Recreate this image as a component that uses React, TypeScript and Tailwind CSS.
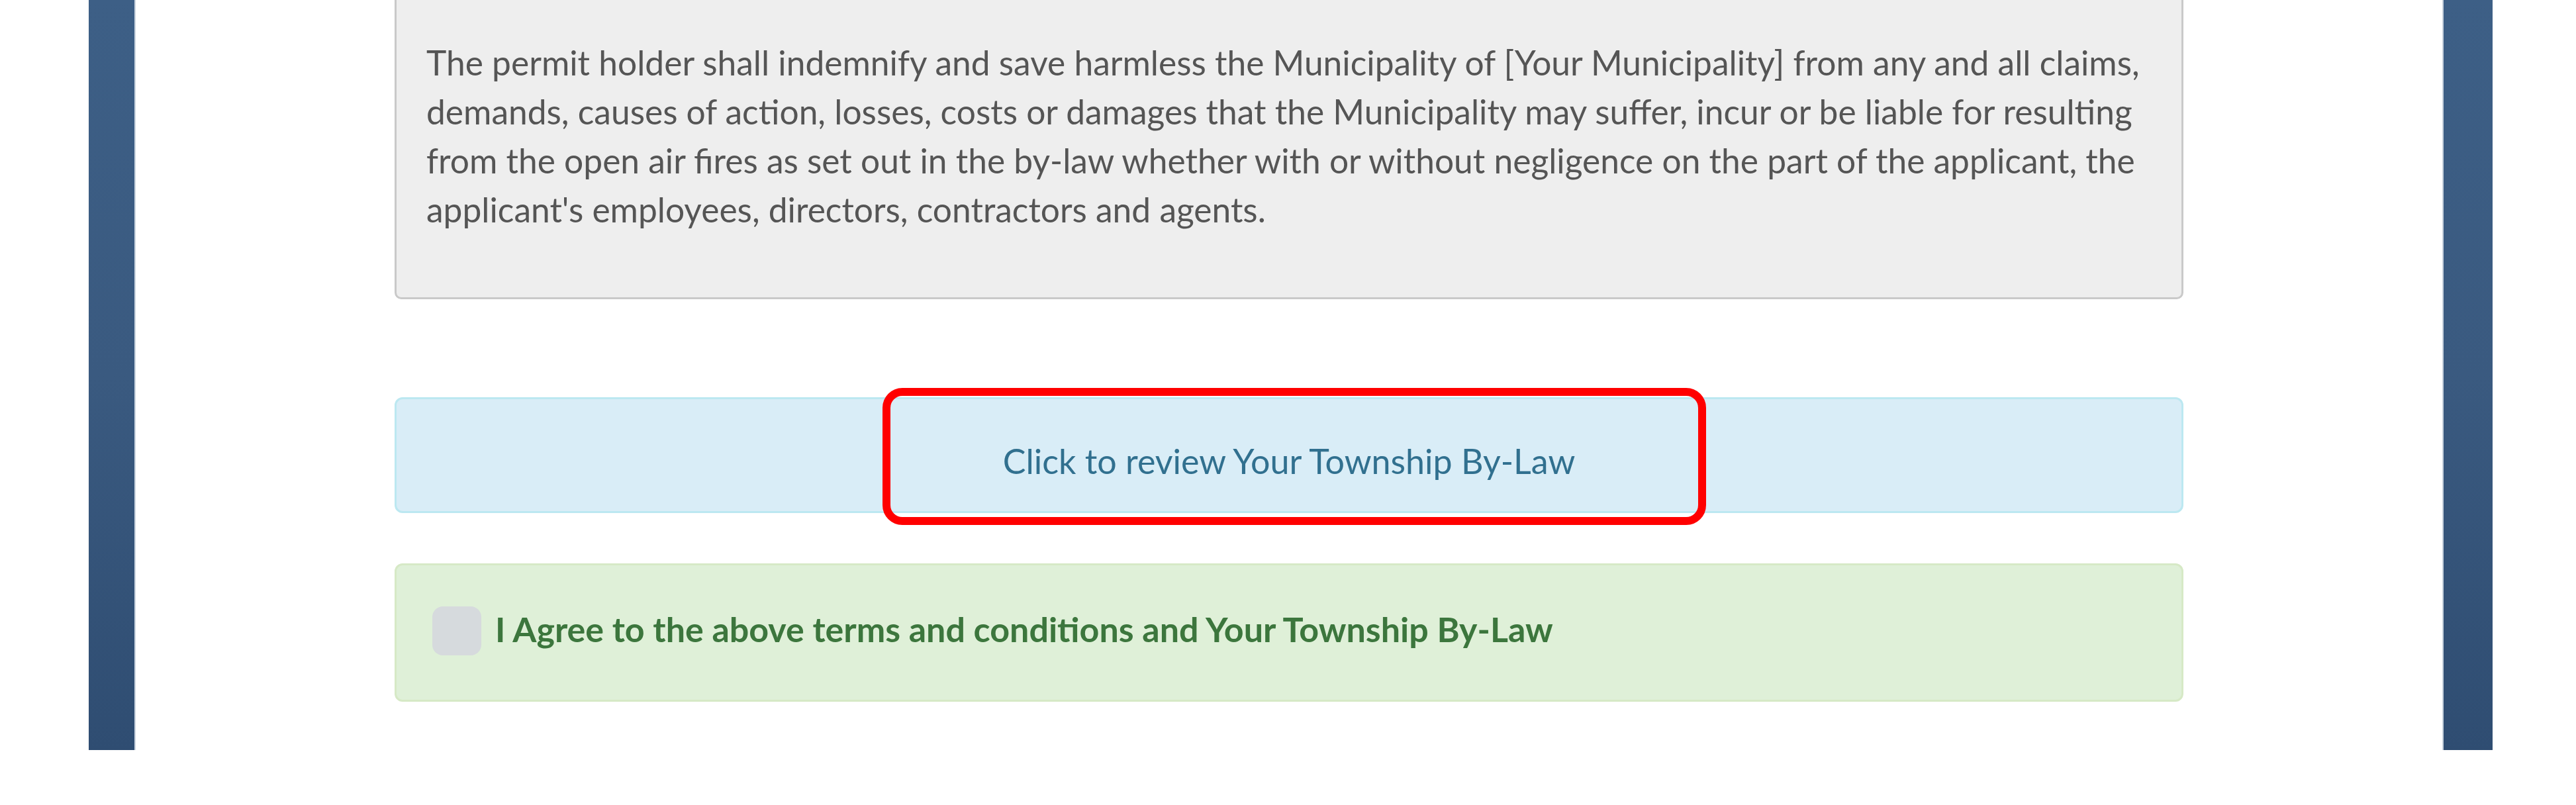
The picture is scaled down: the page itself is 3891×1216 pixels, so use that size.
export default function App() {
  return (
    <div className="w-full h-[1216px] bg-white pl-[134px] pr-[126px] font-['Lato','Liberation_Sans',sans-serif]">
      {/* page background strip */}
      <div className="h-[1133px] flex pl-[69px] pr-[74px] bg-gradient-to-b from-[#3d5f86] via-[#3a5a80] to-[#2f4d72]">
        <div className="flex-1 bg-white border-x-2 border-[#c9d3de] px-[391px]">
          {/* terms well */}
          <div className="bg-[#eeeeee] border-x-[3px] border-b-[3px] border-[#c9c9c9] rounded-b-[10px] pl-[45px] pr-[28px] pt-[57px] pb-[96px]">
            <p className="text-[51.5px] leading-[74px] text-[#555555]">
              The permit holder shall indemnify and save harmless the Municipality of [Your Municipality] from any and all claims,
              demands, causes of action, losses, costs or damages that the Municipality may suffer, incur or be liable for resulting
              from the open air fires as set out in the by-law whether with or without negligence on the part of the applicant, the
              applicant's employees, directors, contractors and agents.
            </p>
          </div>

          {/* by-law link */}
          <div className="relative mt-[148px]">
            <div className="bg-[#d9edf7] border-[3px] border-[#bce8f1] rounded-[12px] pt-[58px] pb-[40px] text-center text-[52px] leading-[71px] text-[#31708f]">
              Click to review Your Township By-Law
            </div>
            <div className="absolute left-[737px] -top-[14px] w-[1244px] h-[207px] border-[12px] border-[#ff0000] rounded-[30px]"></div>
          </div>

          {/* agree */}
          <div className="mt-[76px] bg-[#dff0d8] border-[3px] border-[#d6e9c6] rounded-[12px] pl-[54px] pt-[62px] pb-[67px] flex items-center gap-[21px]">
            <div className="w-[74px] h-[74px] rounded-[16px] bg-[#d6dadd] shrink-0"></div>
            <span className="text-[52px] leading-[71px] font-bold text-[#3c763d] -mt-[6px]">
              I Agree to the above terms and conditions and Your Township By-Law
            </span>
          </div>
        </div>
      </div>
    </div>
  )
}
